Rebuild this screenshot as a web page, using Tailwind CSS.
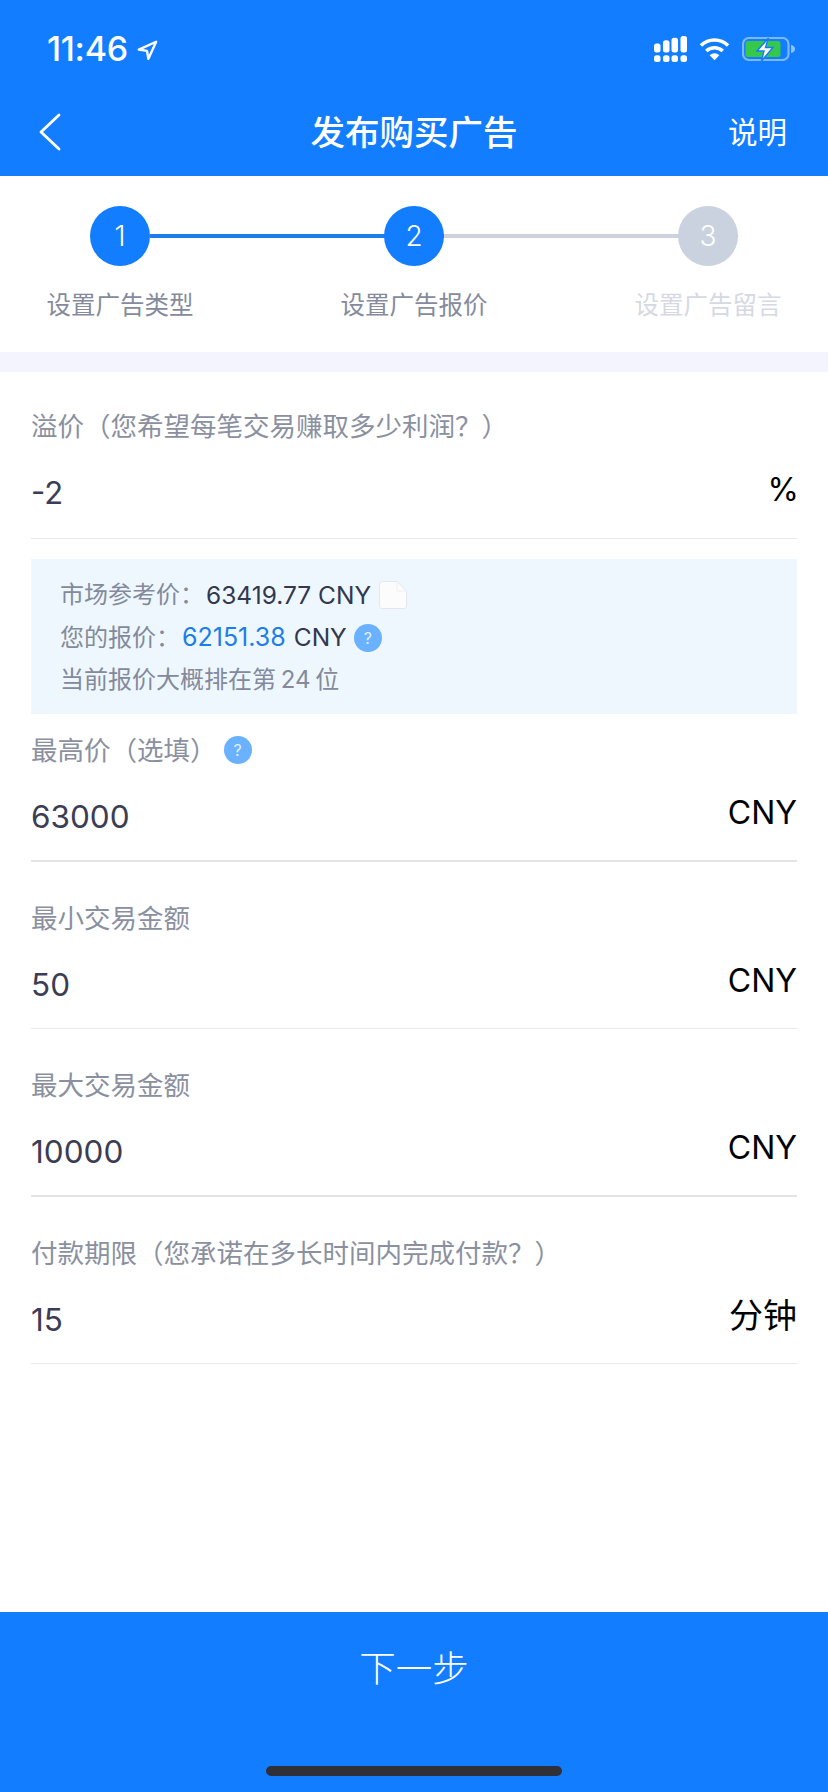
<!DOCTYPE html>
<html lang="zh-CN">
<head>
<meta charset="utf-8">
<script src="https://cdn.jsdelivr.net/npm/@tailwindcss/browser@4"></script>
</head>
<body class="m-0 bg-white">
<div class="w-[828px] h-[1792px] flex flex-col bg-white overflow-hidden font-['Inter','Noto_Sans_CJK_SC',sans-serif]">
  <!-- header -->
  <header class="h-[176px] shrink-0 bg-[#127dff] text-white flex flex-col">
    <div class="h-[88px] pt-[10px] pl-[47px] pr-[33px] flex items-center justify-between">
      <div class="flex items-center gap-[8px] h-[40px]">
        <span class="text-[34px] leading-[40px] font-medium tracking-[-0.3px] font-['Inter',sans-serif]">11:46</span>
        <svg width="22" height="22" viewBox="0 0 24 24" class="mt-[1px]" fill="none" stroke="#fff" stroke-width="2.600" stroke-linejoin="round"><path d="M22 3 3 11.500l9 1.500 1.500 8.500z"/></svg>
      </div>
      <div class="flex items-center gap-[12px] h-[40px]">
        <svg width="33" height="26" viewBox="0 0 33 26" fill="#fff"><rect x="0" y="7.600" width="6.500" height="9" rx="2.500"/><rect x="9" y="4.300" width="6.500" height="12.300" rx="2.500"/><rect x="17.500" y="1.700" width="6.500" height="14.900" rx="2.500"/><rect x="26.500" y="0" width="6.500" height="16.600" rx="2.500"/><rect x="0" y="19.300" width="6.500" height="6.700" rx="2.500"/><rect x="9" y="19.300" width="6.500" height="6.700" rx="2.500"/><rect x="17.500" y="19.300" width="6.500" height="6.700" rx="2.500"/><rect x="26.500" y="19.300" width="6.500" height="6.700" rx="2.500"/></svg>
        <svg width="31" height="24" viewBox="0 0 32 24" fill="none" stroke="#fff" stroke-width="3.600"><path d="M2 8.500a20 20 0 0 1 28 0"/><path d="M7.500 14a12.500 12.500 0 0 1 17 0"/><path d="M16 23.500 11 18.500a7 7 0 0 1 10 0z" fill="#fff" stroke="none"/></svg>
        <svg width="53" height="24" viewBox="0 0 53 24"><rect x="1" y="1" width="45.500" height="22" rx="6" fill="none" stroke="#7db8ff" stroke-width="2.200"/><rect x="3.500" y="4" width="35" height="16" rx="2.500" fill="#36c84b"/><path d="M49 8c2.500.5 4 2 4 4s-1.500 3.500-4 4z" fill="#8ec2ff"/><path d="M26.500 1 15 14h7l-2.500 10L31 10.500h-7.500z" fill="#fff" stroke="#127dff" stroke-width="1.400"/></svg>
      </div>
    </div>
    <div class="h-[88px] relative flex items-center justify-between pl-[38px] pr-[41px]">
      <svg width="24" height="38" viewBox="0 0 24 38" fill="none" stroke="#fff" stroke-width="2.800" stroke-linecap="round" stroke-linejoin="round" class="mt-[-1px]"><path d="M21 2 3 19l18 17"/></svg>
      <h1 class="absolute inset-x-0 top-[21px] text-center text-[34.500px] leading-[48px] font-medium">发布购买广告</h1>
      <span class="text-[29.500px] leading-[40px]">说明</span>
    </div>
  </header>

  <!-- steps -->
  <section class="h-[176px] shrink-0 bg-white grid grid-cols-[294px_294px_238px] pl-[1px]">
    <div class="relative flex flex-col items-center w-[238px]">
      <div class="relative z-10 mt-[30px] w-[60px] h-[60px] rounded-full bg-[#127dff] text-white text-[28px] font-light flex items-center justify-center">1</div>
      <div class="absolute left-[149px] top-[58px] w-[294px] h-[4px] bg-[#1c7ee8]"></div>
      <div class="mt-[21px] text-[24.500px] leading-[36px] text-[#858b9c] whitespace-nowrap">设置广告类型</div>
    </div>
    <div class="relative flex flex-col items-center w-[238px]">
      <div class="relative z-10 mt-[30px] w-[60px] h-[60px] rounded-full bg-[#127dff] text-white text-[28px] font-light flex items-center justify-center">2</div>
      <div class="absolute left-[149px] top-[58px] w-[294px] h-[4px] bg-[#cdd2de]"></div>
      <div class="mt-[21px] text-[24.500px] leading-[36px] text-[#858b9c] whitespace-nowrap">设置广告报价</div>
    </div>
    <div class="relative flex flex-col items-center w-[238px]">
      <div class="relative z-10 mt-[30px] w-[60px] h-[60px] rounded-full bg-[#c9d2de] text-white text-[28px] font-light flex items-center justify-center">3</div>
      <div class="mt-[21px] text-[24.500px] leading-[36px] text-[#d5d9e3] whitespace-nowrap">设置广告留言</div>
    </div>
  </section>
  <div class="h-[20px] shrink-0 bg-[#f3f4fd]"></div>

  <!-- form -->
  <main class="flex-1 px-[31px] pt-[34px]">
    <div class="h-[133px] flex flex-col border-b border-[#e8e9ee]">
      <div class="text-[26.500px] leading-[40px] text-[#8a90a0] whitespace-nowrap">溢价（您希望每笔交易赚取多少利润？）</div>
      <div class="flex justify-between items-start mt-[29px]">
        <span class="text-[31px] leading-[36px] text-[#3a3d55]">-2</span>
        <span class="text-[32px] leading-[36px] text-black mt-[-3px] mr-[-2px]">%</span>
      </div>
    </div>
    <div class="mt-[20px] h-[155px] bg-[#eff7fe] pl-[29px] pt-[15px] text-[24px] text-[#828a9c]">
      <div class="flex items-center whitespace-nowrap h-[42.500px]">市场参考价：<span class="text-[#333750] ml-[2px] text-[24.500px]">63419.77 CNY</span>
        <svg width="28" height="28" viewBox="0 0 28 28" class="ml-[8px]"><path d="M3 .5h15L27.500 10v15a2.500 2.500 0 0 1-2.500 2.500H3A2.500 2.500 0 0 1 .5 25V3A2.500 2.500 0 0 1 3 .5z" fill="#fcfcfc" stroke="#e4e8ed"/><path d="M18 .5V10h9.500" fill="none" stroke="#eef0f3"/></svg>
      </div>
      <div class="flex items-center whitespace-nowrap h-[42.500px]">您的报价：<span class="text-[#1c7ee8] ml-[2px] text-[25px]">62151.38</span><span class="text-[#333750] ml-[8px] text-[24.500px]">CNY</span>
        <span class="ml-[7px] w-[28px] h-[28px] rounded-full bg-[#6ab1ff] text-white/80 text-[16px] leading-[28px] text-center">?</span>
      </div>
      <div class="whitespace-nowrap h-[42.500px] flex items-center [word-spacing:-2px]">当前报价大概排在第 24 位</div>
    </div>
    <div class="h-[148px] flex flex-col border-b-2 border-[#e3e4e8]">
      <div class="mt-[16px] flex items-center text-[26.500px] leading-[40px] text-[#8a90a0] whitespace-nowrap">最高价（选填）
        <span class="ml-[7px] w-[28px] h-[28px] rounded-full bg-[#6ab1ff] text-white/80 text-[16px] leading-[28px] text-center">?</span>
      </div>
      <div class="flex justify-between items-start mt-[29px]">
        <span class="text-[31.500px] leading-[36px] text-[#3a3d55]">63000</span>
        <span class="text-[32px] leading-[36px] text-black mt-[-4px]">CNY</span>
      </div>
    </div>
    <div class="h-[167px] flex flex-col border-b border-[#e8e9ee]">
      <div class="mt-[36px] text-[26.500px] leading-[40px] text-[#8a90a0] whitespace-nowrap">最小交易金额</div>
      <div class="flex justify-between items-start mt-[29px]">
        <span class="text-[31.500px] leading-[36px] text-[#3a3d55]">50</span>
        <span class="text-[32px] leading-[36px] text-black mt-[-4px]">CNY</span>
      </div>
    </div>
    <div class="h-[168px] flex flex-col border-b-2 border-[#e3e4e8]">
      <div class="mt-[36px] text-[26.500px] leading-[40px] text-[#8a90a0] whitespace-nowrap">最大交易金额</div>
      <div class="flex justify-between items-start mt-[29px]">
        <span class="text-[31.500px] leading-[36px] text-[#3a3d55]">10000</span>
        <span class="text-[32px] leading-[36px] text-black mt-[-4px]">CNY</span>
      </div>
    </div>
    <div class="h-[167px] flex flex-col border-b border-[#e8e9ee]">
      <div class="mt-[36px] text-[26.500px] leading-[40px] text-[#8a90a0] whitespace-nowrap">付款期限（您承诺在多长时间内完成付款？）</div>
      <div class="flex justify-between items-start mt-[29px]">
        <span class="text-[31.500px] leading-[36px] text-[#3a3d55]">15</span>
        <span class="text-[34px] leading-[36px] text-black mt-[-4px]">分钟</span>
      </div>
    </div>
  </main>

  <!-- footer -->
  <footer class="relative h-[180px] shrink-0 bg-[#127dff] text-white">
    <div class="pt-[32px] text-center text-[36.500px] leading-[50px] font-light">下一步</div>
    <div class="absolute left-[266px] top-[154px] w-[296px] h-[10px] rounded-full bg-[#2f3038]"></div>
  </footer>
</div>
</body>
</html>
